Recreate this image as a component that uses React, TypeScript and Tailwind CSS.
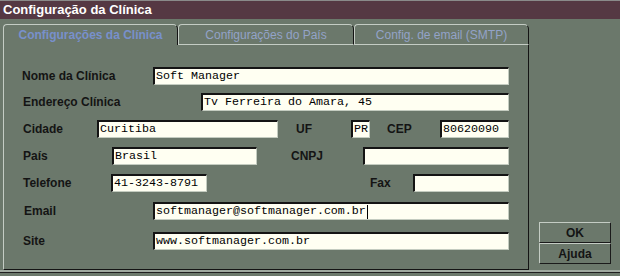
import type { ReactNode } from 'react';

const label = "font-['Liberation_Sans',Arial,sans-serif] text-[12px] font-bold text-[#141414] leading-none";

function Box({ w, children, caret }: { w: string; children?: ReactNode; caret?: boolean }) {
  return (
    <div
      className={`${w} flex h-[18px] items-center overflow-hidden border-t-2 border-l-2 border-b border-r border-t-[#141414] border-l-[#141414] border-b-[#c4ccc0] border-r-[#c4ccc0] bg-[#fffff2] pl-[1px] font-['Liberation_Mono','Courier_New',monospace] text-[11.67px] leading-none text-black whitespace-pre`}
    >
      {children}
      {caret && <span className="ml-px inline-block h-[14px] w-px bg-black" />}
    </div>
  );
}

function Tab({ text, active, w }: { text: string; active?: boolean; w: string }) {
  return (
    <div
      className={`${w} flex h-[21px] items-center justify-center rounded-tl-[4px] rounded-tr-[5px] border-t border-l border-r border-t-[#c4ccc4] border-l-[#c4ccc4] border-r-[#141414] font-['Liberation_Sans',Arial,sans-serif] text-[12px] ${
        active ? 'font-bold text-[#7890cc]' : 'border-b border-b-[#c4ccc4] text-[#93a3c8]'
      }`}
    >
      {text}
    </div>
  );
}

function Button({ children, h }: { children: ReactNode; h: string }) {
  return (
    <button
      className={`${h} w-[72px] border-t border-l border-b border-r border-t-[#c4ccc4] border-l-[#c4ccc4] border-b-[#1a1a1a] border-r-[#1a1a1a] bg-[#6b786b] font-['Liberation_Sans',Arial,sans-serif] text-[12px] font-bold leading-none text-[#141414]`}
    >
      {children}
    </button>
  );
}

export default function App() {
  return (
    <div className="flex h-[276px] w-[620px] flex-col overflow-hidden bg-[#6b786b]">
      <div className="flex h-[19px] items-center border-t border-t-[#8a8a8a] bg-[#553843] pl-[3px] font-['Liberation_Sans',Arial,sans-serif] text-[13px] font-bold text-white">
        Configuração da Clínica
      </div>

      <div className="mt-[5px] flex">
        <div className="ml-[3px] flex w-[526px] flex-col">
          <div className="flex">
            <Tab w="w-[175px]" text="Configurações da Clínica" active />
            <Tab w="w-[176px]" text="Configurações do País" />
            <Tab w="w-[175px]" text="Config. de email (SMTP)" />
          </div>

          <div className="flex h-[225px] flex-col border-l border-r border-b border-l-[#c4ccc4] border-r-[#141414] border-b-[#141414] pl-[18px] pt-[22px]">
            <div className="flex items-center">
              <span className={`${label} w-[131px]`}>Nome da Clínica</span>
              <Box w="w-[356px]">Soft Manager</Box>
            </div>

            <div className="mt-[8px] flex items-center">
              <span className={`${label} ml-px w-[178px]`}>Endereço Clínica</span>
              <Box w="w-[308px]">Tv Ferreira do Amara, 45</Box>
            </div>

            <div className="mt-[9px] flex items-center">
              <span className={`${label} ml-px w-[74px]`}>Cidade</span>
              <Box w="w-[181px]">Curitiba</Box>
              <span className={`${label} ml-[18px] w-[55px]`}>UF</span>
              <Box w="w-[19px]">PR</Box>
              <span className={`${label} ml-[17px] w-[53px]`}>CEP</span>
              <Box w="w-[69px]">80620090</Box>
            </div>

            <div className="mt-[9px] flex items-center">
              <span className={`${label} ml-px w-[89px]`}>País</span>
              <Box w="w-[145px]">Brasil</Box>
              <span className={`${label} ml-[34px] w-[72px]`}>CNPJ</span>
              <Box w="w-[146px]" />
            </div>

            <div className="mt-[9px] flex items-center">
              <span className={`${label} ml-px w-[88px]`}>Telefone</span>
              <Box w="w-[96px]">41-3243-8791</Box>
              <span className={`${label} ml-[163px] w-[43px]`}>Fax</span>
              <Box w="w-[96px]" />
            </div>

            <div className="mt-[10px] flex items-center">
              <span className={`${label} ml-[2px] w-[129px]`}>Email</span>
              <Box w="w-[356px]" caret>softmanager@softmanager.com.br</Box>
            </div>

            <div className="mt-[12px] flex items-center">
              <span className={`${label} ml-px w-[130px]`}>Site</span>
              <Box w="w-[356px]">www.softmanager.com.br</Box>
            </div>
          </div>
        </div>

        <div className="flex flex-1 flex-col justify-end pb-[6px] pl-[10px]">
          <Button h="h-[21px]">OK</Button>
          <Button h="h-[21px]">Ajuda</Button>
        </div>
      </div>

      <div className="h-[6px] border-t-2 border-t-[#9fa99f]">
        <div className="h-px bg-[#1e1e1e]" />
      </div>
    </div>
  );
}
